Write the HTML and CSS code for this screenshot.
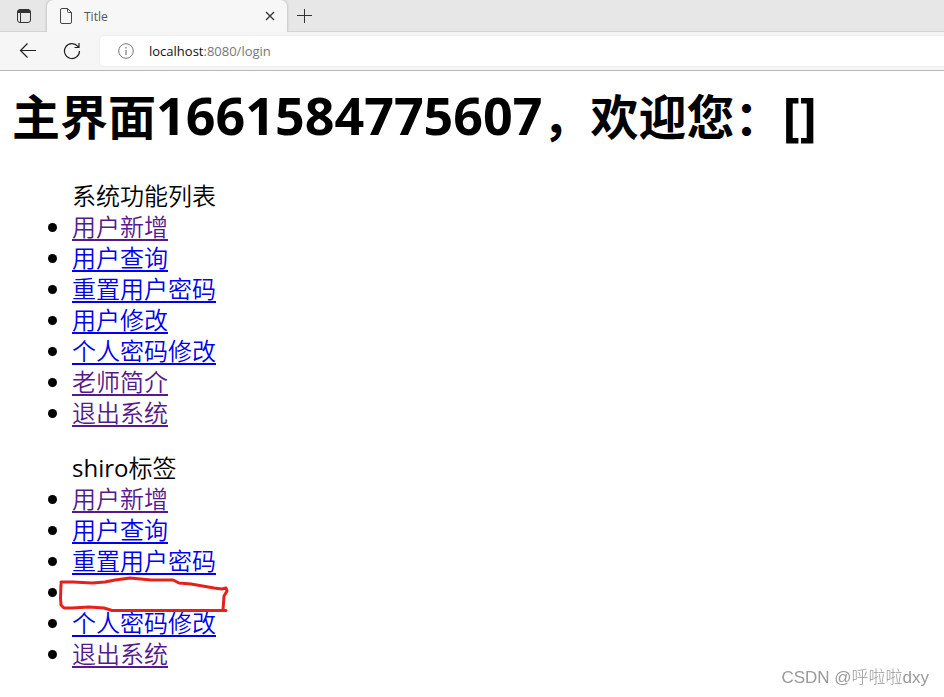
FILE: index.html
```html
<!DOCTYPE html>
<html lang="zh">
<head>
<meta charset="UTF-8">
<meta name="viewport" content="width=device-width, initial-scale=1.0">
<title>Title</title>
<link rel="stylesheet" href="styles.css">
</head>
<body>

<header class="browser">
  <!-- 标签栏 -->
  <div class="tab-strip">
    <button class="icon-button tab-menu" aria-label="标签操作">
      <svg width="16" height="16" viewBox="0 0 16 16"><rect x="1.5" y="1.5" width="13" height="13" rx="2.5" fill="none" stroke="#333"/><path d="M1.5 5V4a2.5 2.5 0 0 1 2.5-2.5h8A2.5 2.5 0 0 1 14.5 4v1z" fill="#333"/><path d="M4.5 5v9.5" stroke="#333"/></svg>
    </button>
    <div class="tab">
      <svg width="14" height="18" viewBox="0 0 14 18"><path d="M3 1.5h5.5l4 4V15a1.5 1.5 0 0 1-1.5 1.5H3A1.5 1.5 0 0 1 1.5 15V3A1.5 1.5 0 0 1 3 1.5zM8.5 1.5V4.5a1 1 0 0 0 1 1h3" fill="none" stroke="#444"/></svg>
      <span class="tab-title">Title</span>
      <button class="icon-button" aria-label="关闭标签">
        <svg width="10" height="10" viewBox="0 0 10 10"><path d="M1 1l8 8M9 1L1 9" stroke="#333" stroke-width="1.3"/></svg>
      </button>
    </div>
    <button class="icon-button new-tab" aria-label="新建标签">
      <svg width="16" height="16" viewBox="0 0 16 16"><path d="M8.5 1v14M1 7.5h15" stroke="#333"/></svg>
    </button>
  </div>

  <!-- 地址栏 -->
  <div class="toolbar">
    <button class="icon-button" aria-label="后退">
      <svg width="18" height="18" viewBox="0 0 18 18"><path d="M17 8.5H2M8.5 1.5L1.5 8.5l7 7" fill="none" stroke="#222" stroke-width="1.2"/></svg>
    </button>
    <button class="icon-button" aria-label="刷新">
      <svg width="18" height="18" viewBox="0 0 18 18"><path d="M16.5 9A7.5 7.5 0 1 1 14.8 4.3L15.5 5.5M16 1v4.5h-4.5" fill="none" stroke="#222" stroke-width="1.2"/></svg>
    </button>
    <div class="address">
      <svg width="16" height="16" viewBox="0 0 16 16"><circle cx="8" cy="8" r="7.3" fill="none" stroke="#777"/><path d="M8 7v5M8 4v1.5" stroke="#777" stroke-width="1.2"/></svg>
      <span class="url"><span class="host">localhost</span>:8080/login</span>
    </div>
  </div>
</header>

<main class="page">
  <h1>主界面<span class="latin">1661584775607</span>，欢迎您：<span class="latin">[]</span></h1>

  <ul>
    系统功能列表
    <li><a class="visited" href="#">用户新增</a></li>
    <li><a href="#">用户查询</a></li>
    <li><a href="#">重置用户密码</a></li>
    <li><a href="#">用户修改</a></li>
    <li><a href="#">个人密码修改</a></li>
    <li><a class="visited" href="#">老师简介</a></li>
    <li><a class="visited" href="#">退出系统</a></li>
  </ul>

  <ul>
    <span class="shiro">shiro</span>标签
    <li><a class="visited" href="#">用户新增</a></li>
    <li><a href="#">用户查询</a></li>
    <li><a href="#">重置用户密码</a></li>
    <li class="marked">
      <svg class="scribble" width="172" height="38" viewBox="0 0 172 38" fill="none" stroke="#e8201c" stroke-width="3" stroke-linecap="round" stroke-linejoin="round"><path d="M3 6h12l19 1 13-1 10-2 15-2 21 2h22l6 3 12 1 23 4 8 1 4-1 1 3-3 5-1 14M3 8L2.5 22 3 29l3 3h8l17-1 15 1 8 2.5h114"/></svg>
    </li>
    <li><a href="#">个人密码修改</a></li>
    <li><a class="visited" href="#">退出系统</a></li>
  </ul>
</main>

<div class="watermark">CSDN @呼啦啦dxy</div>

</body>
</html>
```
FILE: styles.css
```css
body {
  margin: 0;
  background: #fff;
  color: #000;
  font-family: "Open Sans", "Noto Sans CJK SC", sans-serif;
}
.icon-button {
  display: flex;
  padding: 0;
  border: none;
  background: none;
}
.browser {
  border-bottom: 1px solid #b8b8b8;
  background: #f6f6f6;
  font-size: 12px;
}
.tab-strip {
  display: flex;
  align-items: center;
  height: 32px;
  background: #e7e7e7;
  box-shadow: inset 0 -1px 0 #d4d4d4;
}
.tab-menu {
  padding: 0 15px 0 16px;
}
.tab {
  display: flex;
  align-items: center;
  box-sizing: border-box;
  width: 240px;
  height: 32px;
  padding: 0 12px;
  border-radius: 6px 6px 0 0;
  background: #f7f7f7;
  box-shadow: 0 0 3px #aaa;
  clip-path: inset(0 -4px 0 -4px);
}
.tab-title {
  flex: 1;
  padding-left: 11px;
  color: #555;
}
.new-tab {
  padding-left: 9px;
}
.toolbar {
  display: flex;
  align-items: center;
  gap: 26px;
  height: 38px;
  padding-left: 19px;
}
.address {
  display: flex;
  flex: 1;
  align-items: center;
  gap: 15px;
  height: 30px;
  margin-left: -7px;
  padding-left: 18px;
  border-radius: 4px 0 0 4px;
  background: #fff;
  box-shadow: 0 0 2px #ddd;
}
.url {
  color: #777;
  font-size: 13px;
}
.host {
  color: #111;
}
.page {
  padding: 0 12px;
  font-size: 24px;
  line-height: 31px;
}
h1 {
  margin: 12px 0 31px;
  font-size: 48px;
  line-height: 64px;
}
.latin {
  font-size: 52px;
}
ul {
  margin: 0 0 24px;
  padding-left: 60px;
  font-weight: 350;
}
.shiro {
  font-weight: 400;
}
a {
  color: #0000ee;
  text-decoration-thickness: 2px;
  text-underline-offset: 3px;
}
a.visited {
  color: #551a8b;
}
.marked {
  position: relative;
  height: 31px;
}
/* 手绘红框 */
.scribble {
  position: absolute;
  top: 0;
  left: -14px;
}
.watermark {
  position: fixed;
  right: 15px;
  bottom: 8px;
  color: #999;
  font-family: "Liberation Sans", "Noto Sans CJK SC", sans-serif;
  font-size: 17px;
  font-weight: 300;
  line-height: 22px;
}
```
